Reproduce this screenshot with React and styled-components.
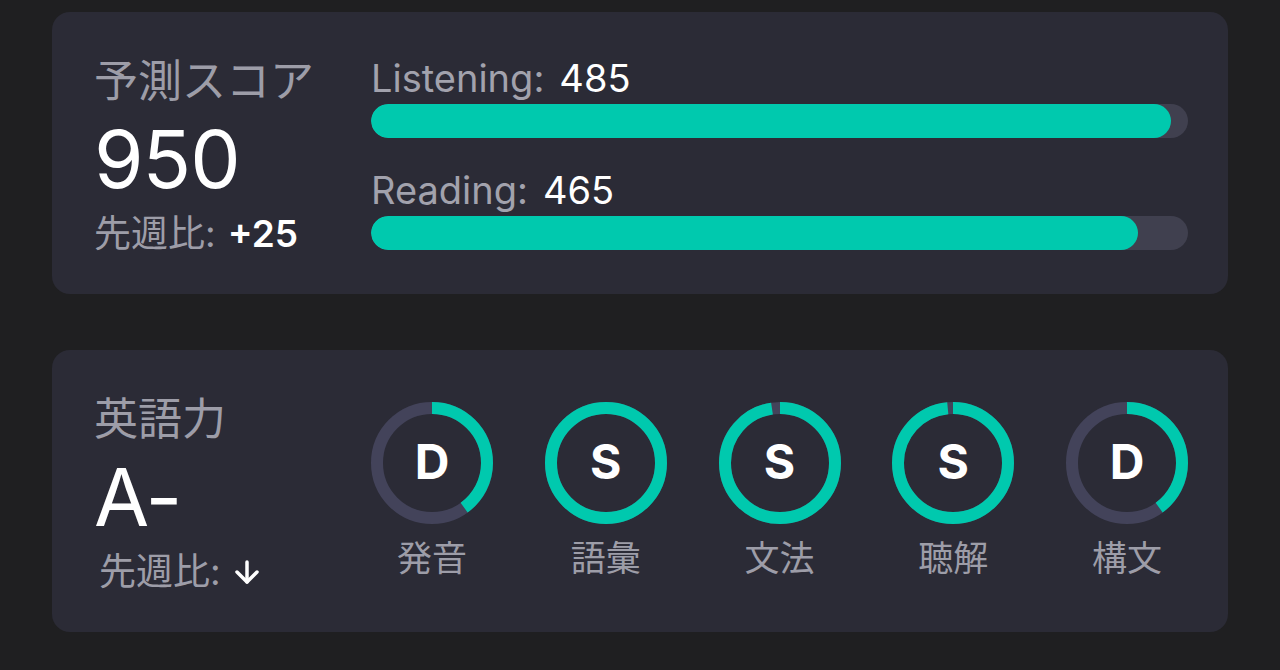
import React from 'react';
import styled, { createGlobalStyle } from 'styled-components';

const GlobalStyle = createGlobalStyle`
  html, body {
    margin: 0;
    padding: 0;
    background: #1f1f21;
  }
  body {
    font-family: Inter, "Noto Sans CJK JP", sans-serif;
    -webkit-font-smoothing: antialiased;
  }
`;

const Page = styled.div`
  width: 1280px;
  height: 670px;
  padding: 12px 52px 0;
  box-sizing: border-box;
  display: flex;
  flex-direction: column;
  gap: 56px;
`;

const Card = styled.section`
  height: 282px;
  background: #2b2b36;
  border-radius: 18px;
  display: flex;
  align-items: center;
  padding: 0 40px 0 42px;
  box-sizing: border-box;
`;

const Summary = styled.div`
  flex: 0 0 277px;
  display: flex;
  flex-direction: column;
  padding-top: 6px;
`;

const SummaryTitle = styled.div`
  color: #9d9da8;
  font-size: 44px;
  line-height: 50px;
  margin-bottom: 5px;
`;

const BigValue = styled.div`
  color: #ffffff;
  font-size: 80px;
  line-height: 96px;
  letter-spacing: -1px;
`;

const Delta = styled.div`
  color: #9d9da8;
  font-size: 37px;
  line-height: 44px;
  margin-top: 5px;
  display: flex;
  align-items: center;
  gap: 12px;
  padding-left: ${({ indent }) => indent || 0}px;

  & b {
    color: #ffffff;
    font-weight: 600;
  }
`;

const Bars = styled.div`
  flex: 1;
  display: flex;
  flex-direction: column;
  gap: 30px;
`;

const BarBlock = styled.div`
  display: flex;
  flex-direction: column;
  gap: 4px;
`;

const BarLabel = styled.div`
  color: #a2a2ad;
  font-size: 38px;
  line-height: 44px;

  & span {
    color: #ffffff;
    margin-left: 15px;
  }
`;

const Track = styled.div`
  height: 34px;
  border-radius: 17px;
  background: #40404f;
  overflow: hidden;
`;

const Fill = styled.div`
  height: 100%;
  border-radius: 17px;
  background: #00c9ae;
`;

const Rings = styled.div`
  flex: 1;
  display: flex;
  justify-content: space-between;
`;

const RingItem = styled.div`
  display: flex;
  flex-direction: column;
  align-items: center;
  gap: 12px;
`;

const RingBox = styled.div`
  position: relative;
  width: 122px;
  height: 122px;
`;

const Grade = styled.div`
  position: absolute;
  inset: 0 0 4px 0;
  display: flex;
  align-items: center;
  justify-content: center;
  color: #ffffff;
  font-size: 48px;
  font-weight: 700;
`;

const RingLabel = styled.div`
  color: #9d9da8;
  font-size: 35px;
  line-height: 44px;
`;

const ScoreBar = ({ label, value, max }) => (
  <BarBlock>
    <BarLabel>
      {label}:<span>{value}</span>
    </BarLabel>
    <Track>
      <Fill style={{ width: `${(value / max) * 100}%` }} />
    </Track>
  </BarBlock>
);

const Ring = ({ grade, label, progress }) => {
  const r = 55;
  const c = 2 * Math.PI * r;
  return (
    <RingItem>
      <RingBox>
        <svg width="122" height="122" viewBox="0 0 122 122">
          <circle cx="61" cy="61" r={r} fill="none" stroke="#43435a" strokeWidth="12" />
          <circle
            cx="61"
            cy="61"
            r={r}
            fill="none"
            stroke="#00c9ae"
            strokeWidth="12"
            strokeDasharray={`${c * progress} ${c}`}
            transform="rotate(-90 61 61)"
          />
        </svg>
        <Grade>{grade}</Grade>
      </RingBox>
      <RingLabel>{label}</RingLabel>
    </RingItem>
  );
};

const DownArrow = () => (
  <svg width="28" height="26" viewBox="0 0 28 26" fill="none" stroke="#fff" strokeWidth="3.5" strokeLinecap="round" strokeLinejoin="round">
    <path d="M14 3v20" />
    <path d="M4 13l10 10 10-10" />
  </svg>
);

const skills = [
  { grade: 'D', label: '発音', progress: 0.4 },
  { grade: 'S', label: '語彙', progress: 1 },
  { grade: 'S', label: '文法', progress: 0.975 },
  { grade: 'S', label: '聴解', progress: 0.983 },
  { grade: 'D', label: '構文', progress: 0.4 },
];

const App = () => {
  return (
    <>
      <GlobalStyle />
      <Page>
        <Card>
          <Summary>
            <SummaryTitle>予測スコア</SummaryTitle>
            <BigValue>950</BigValue>
            <Delta>
              先週比: <b>+25</b>
            </Delta>
          </Summary>
          <Bars>
            <ScoreBar label="Listening" value={485} max={495} />
            <ScoreBar label="Reading" value={465} max={495} />
          </Bars>
        </Card>
        <Card>
          <Summary>
            <SummaryTitle>英語力</SummaryTitle>
            <BigValue>A-</BigValue>
            <Delta indent={5}>
              先週比: <DownArrow />
            </Delta>
          </Summary>
          <Rings>
            {skills.map((s) => (
              <Ring key={s.label} {...s} />
            ))}
          </Rings>
        </Card>
      </Page>
    </>
  );
};

export default App;
